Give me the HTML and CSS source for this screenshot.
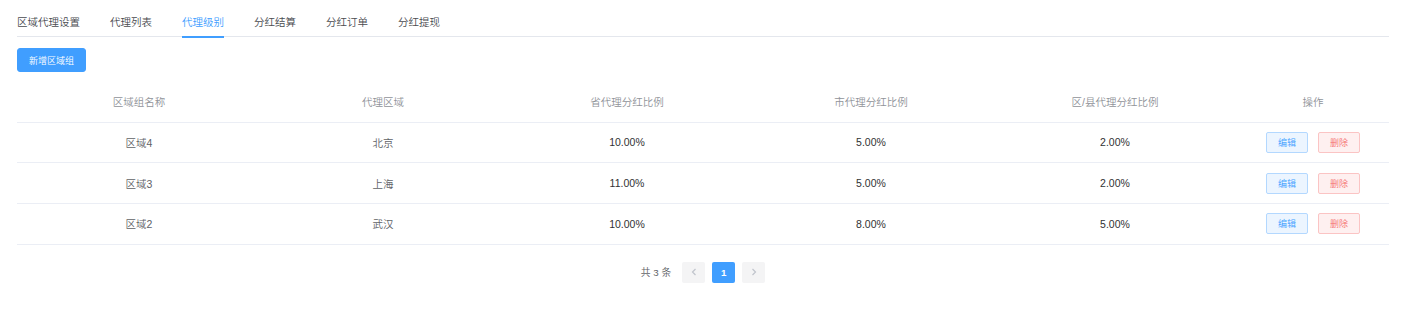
FILE: index.html
```html
<!DOCTYPE html>
<html>
<head>
    <link rel="stylesheet" href="styles.css">
</head>
<body>
    <div class="page">
        <div class="tabs">
            <div class="tab">区域代理设置</div>
            <div class="tab">代理列表</div>
            <div class="tab active">代理级别</div>
            <div class="tab">分红结算</div>
            <div class="tab">分红订单</div>
            <div class="tab">分红提现</div>
        </div>

        <div class="toolbar">
            <button class="btn btn-primary">新增区域组</button>
        </div>

        <table class="grid">
            <colgroup>
                <col class="col">
                <col class="col">
                <col class="col">
                <col class="col">
                <col class="col">
                <col class="col-op">
            </colgroup>
            <thead>
                <tr>
                    <th>区域组名称</th>
                    <th>代理区域</th>
                    <th>省代理分红比例</th>
                    <th>市代理分红比例</th>
                    <th>区/县代理分红比例</th>
                    <th>操作</th>
                </tr>
            </thead>
            <tbody>
                <tr>
                    <td>区域4</td>
                    <td>北京</td>
                    <td class="num">10.00%</td>
                    <td class="num">5.00%</td>
                    <td class="num">2.00%</td>
                    <td>
                        <div class="ops">
                            <button class="btn-mini edit">编辑</button>
                            <button class="btn-mini del">删除</button>
                        </div>
                    </td>
                </tr>
                <tr>
                    <td>区域3</td>
                    <td>上海</td>
                    <td class="num">11.00%</td>
                    <td class="num">5.00%</td>
                    <td class="num">2.00%</td>
                    <td>
                        <div class="ops">
                            <button class="btn-mini edit">编辑</button>
                            <button class="btn-mini del">删除</button>
                        </div>
                    </td>
                </tr>
                <tr>
                    <td>区域2</td>
                    <td>武汉</td>
                    <td class="num">10.00%</td>
                    <td class="num">8.00%</td>
                    <td class="num">5.00%</td>
                    <td>
                        <div class="ops">
                            <button class="btn-mini edit">编辑</button>
                            <button class="btn-mini del">删除</button>
                        </div>
                    </td>
                </tr>
            </tbody>
        </table>

        <div class="pager">
            <span class="total">共 3 条</span>
            <button class="pg-btn" disabled>
                <svg width="8" height="8" viewBox="0 0 8 8" fill="none" stroke="currentColor" stroke-width="1.2">
                    <path d="M5.5 1L2.5 4l3 3"></path>
                </svg>
            </button>
            <button class="pg-btn current">1</button>
            <button class="pg-btn" disabled>
                <svg width="8" height="8" viewBox="0 0 8 8" fill="none" stroke="currentColor" stroke-width="1.2">
                    <path d="M2.5 1l3 3-3 3"></path>
                </svg>
            </button>
        </div>
    </div>
</body>
</html>
```

FILE: styles.css
```css
* {
    margin: 0;
    padding: 0;
    box-sizing: border-box;
}

body {
    font-family: "Liberation Sans", "Noto Sans CJK SC", sans-serif;
    font-weight: 350;
    background: #fff;
    color: #606266;
}

.page {
    padding: 7px 12px 0 17px;
}

/* tabs */
.tabs {
    display: flex;
    height: 30px;
    border-bottom: 1px solid #e4e7ed;
}

.tab {
    height: 30px;
    line-height: 30px;
    padding: 0 15px;
    font-size: 10.5px;
    color: #494b50;
    position: relative;
}

.tab:first-child {
    padding-left: 0;
}

.tab.active {
    color: #409eff;
}

.tab.active::after {
    content: "";
    position: absolute;
    left: 15px;
    right: 15px;
    bottom: -1px;
    height: 2px;
    background: #409eff;
}

.toolbar {
    margin-top: 11px;
}

button {
    font-family: inherit;
    font-weight: inherit;
    cursor: pointer;
}

.btn {
    height: 24px;
    padding: 0 11px;
    font-size: 9px;
    border-radius: 3px;
    border: 1px solid #409eff;
}

.btn-primary {
    background: #409eff;
    color: #fff;
    width: 69px;
}

/* table */
.grid {
    width: 100%;
    margin-top: 10px;
    border-collapse: collapse;
    table-layout: fixed;
    font-size: 10.5px;
}

.col {
    width: 244px;
}

.col-op {
    width: 152px;
}

.grid th,
.grid td {
    text-align: center;
    border-bottom: 1px solid #ebeef5;
}

.grid th {
    height: 40px;
    font-weight: inherit;
    color: #909399;
}

.grid td {
    height: 40.7px;
    color: #606266;
}

.grid td.num {
    color: #303133;
}

.ops {
    display: flex;
    justify-content: center;
    gap: 10px;
}

.btn-mini {
    width: 42px;
    height: 21px;
    font-size: 9px;
    border-radius: 2px;
    border: 1px solid;
}

.btn-mini.edit {
    background: #ecf5ff;
    border-color: #b3d8ff;
    color: #409eff;
}

.btn-mini.del {
    background: #fef0f0;
    border-color: #fbc4c4;
    color: #f56c6c;
}

/* pagination */
.pager {
    display: flex;
    justify-content: center;
    align-items: center;
    margin-top: 17px;
    gap: 7px;
}

.total {
    font-size: 9.75px;
    color: #606266;
    margin-right: 4px;
}

.pg-btn {
    width: 23px;
    height: 21px;
    border: none;
    border-radius: 2px;
    background: #f4f4f5;
    color: #c0c4cc;
    font-size: 9.75px;
    font-weight: 700;
    display: flex;
    align-items: center;
    justify-content: center;
}

.pg-btn:disabled {
    cursor: not-allowed;
}

.pg-btn.current {
    background: #409eff;
    color: #fff;
}
```
